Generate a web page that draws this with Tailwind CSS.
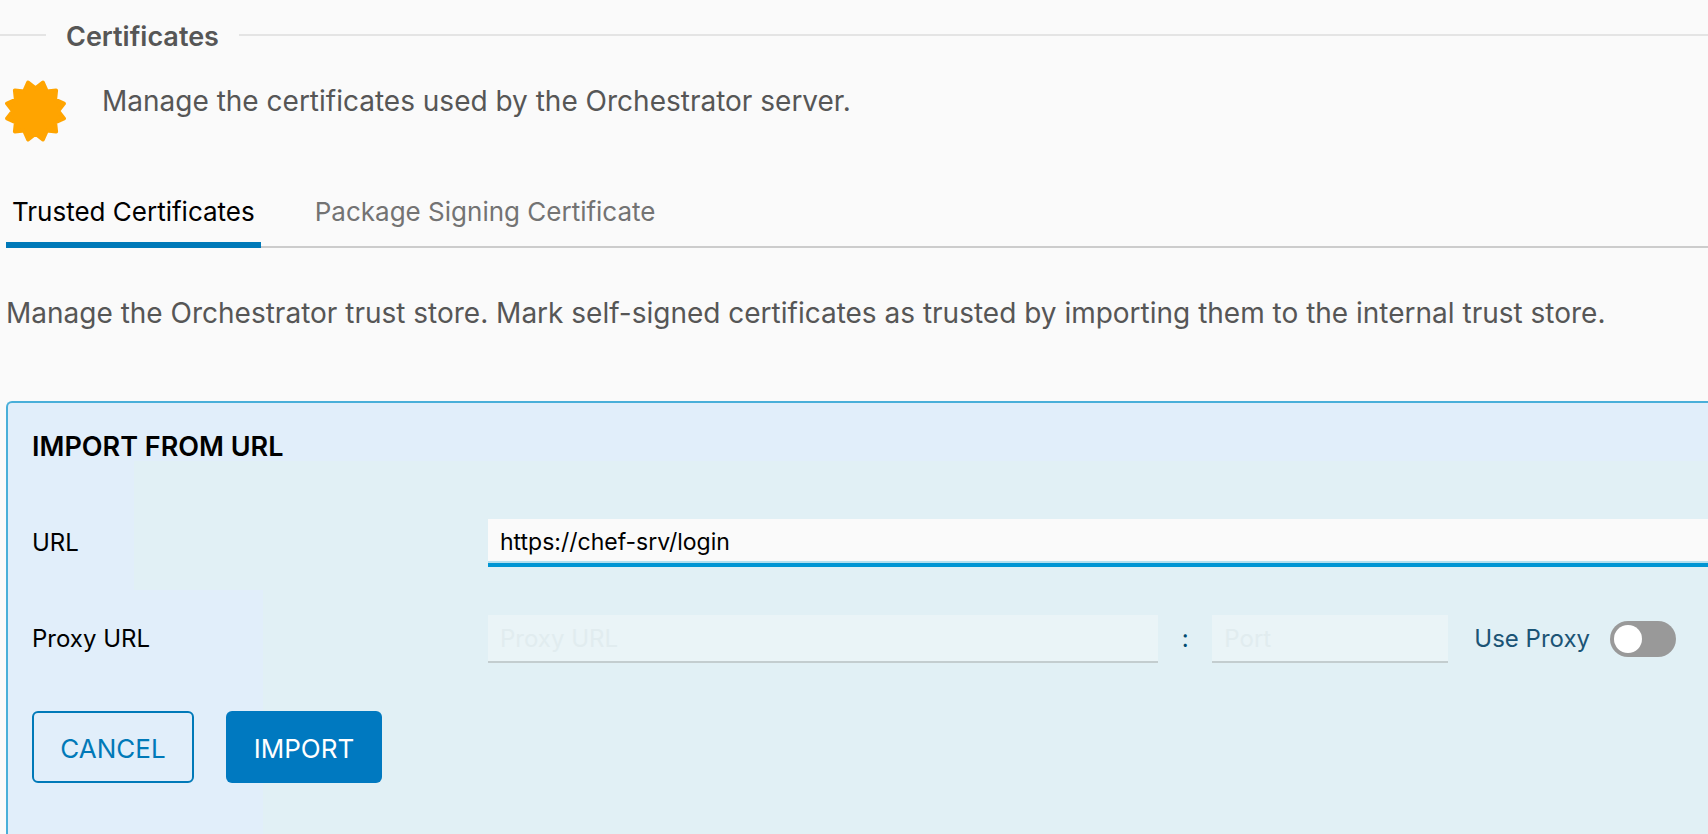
<!DOCTYPE html>
<html lang="en">
<head>
<meta charset="utf-8">
<meta name="viewport" content="width=device-width, initial-scale=1">
<title>Certificates</title>
<script src="https://cdn.jsdelivr.net/npm/@tailwindcss/browser@4"></script>
</head>
<body class="min-h-screen flex flex-col overflow-hidden bg-[#fafafa] font-[Inter,sans-serif] text-[28px] leading-9 text-[#565656]">
  <header class="flex items-center pt-[15px]">
    <span class="w-[46px] h-[2px] bg-[#e4e4e4]"></span>
    <h1 class="px-5 pt-1 text-[27px] font-semibold">Certificates</h1>
    <span class="flex-1 h-[2px] bg-[#e4e4e4]"></span>
  </header>

  <div class="flex items-start gap-9 pl-[5px] pt-[25px]">
    <svg class="w-[61px] h-[62px] shrink-0" viewBox="-30.5 -31 61 62" fill="#ffa400" stroke="#ffa400" stroke-width="4" stroke-linejoin="round" aria-hidden="true">
      <polygon points="0,-22.6 7.4,-28.4 11.3,-19.6 20.6,-20.6 19.6,-11.3 28.4,-7.4 22.6,0 28.4,7.4 19.6,11.3 20.6,20.6 11.3,19.6 7.4,28.4 0,22.6 -7.4,28.4 -11.3,19.6 -20.6,20.6 -19.6,11.3 -28.4,7.4 -22.6,0 -28.4,-7.4 -19.6,-11.3 -20.6,-20.6 -11.3,-19.6 -7.4,-28.4"/>
    </svg>
    <p class="pt-[3px]">Manage the certificates used by the Orchestrator server.</p>
  </div>

  <div role="tablist" class="ml-[6px] mt-[42px] flex gap-12 shadow-[inset_0_-2px_#cccccc] text-[26px]">
    <button role="tab" aria-selected="true" class="px-[6px] pt-2.5 pb-3 text-black border-b-6 border-[#0079b8]">Trusted Certificates</button>
    <button role="tab" aria-selected="false" class="px-[6px] pt-2.5 pb-3 text-[#737373] border-b-6 border-transparent">Package Signing Certificate</button>
  </div>

  <p class="pl-[6px] pt-[47px] whitespace-nowrap">Manage the Orchestrator trust store. Mark self-signed certificates as trusted by importing them to the internal trust store.</p>

  <form class="ml-[6px] mt-[70px] flex-1 rounded-tl-md border-t-2 border-l-2 border-[#49afd9] pl-6 pr-8 pt-[26px] pb-12 text-black text-2xl bg-[#e1eefa] bg-no-repeat bg-[linear-gradient(#e1f0f5,#e1f0f5),linear-gradient(#e1f0f5,#e1f0f5)] [background-position:left_126px_top_58px,left_255px_top_187px] [background-size:100%_129px,100%_100%]">
    <h2 class="text-[27px] leading-9 font-semibold">IMPORT FROM URL</h2>

    <div class="mt-[54px] flex items-center">
      <label for="url" class="w-[456px] shrink-0">URL</label>
      <input id="url" type="text" value="https://chef-srv/login" class="-mr-8 min-w-0 flex-1 h-12 px-3 pt-0.5 text-[23px] bg-[#fafafa] border-b-4 border-[#0095d3] shadow-[inset_0_-2px_#b3dfee] outline-none">
    </div>

    <div class="mt-12 flex items-center">
      <label for="proxy" class="w-[456px] shrink-0">Proxy URL</label>
      <input id="proxy" type="text" placeholder="Proxy URL" disabled class="min-w-0 flex-1 h-12 px-3 bg-[#eaf4f7] border-b-2 border-[#c3cdcf] placeholder:text-[#e1ecef]">
      <span class="w-[54px] text-center text-[#004a70]">:</span>
      <input id="port" type="text" placeholder="Port" aria-label="Port" disabled class="w-[236px] h-12 px-3 bg-[#eaf4f7] border-b-2 border-[#c3cdcf] placeholder:text-[#e1ecef]">
      <label for="use-proxy" class="ml-[26px] mr-5 text-[#1b5475]">Use Proxy</label>
      <input id="use-proxy" type="checkbox" role="switch" class="appearance-none flex items-center w-[66px] h-9 shrink-0 rounded-full bg-[#999999] px-1 before:block before:size-7 before:rounded-full before:bg-white checked:bg-[#62a420] checked:justify-end">
    </div>

    <div class="mt-12 flex gap-8">
      <button type="button" class="w-[162px] h-[72px] rounded-md border-2 border-[#0079b8] pt-1 text-[26px] text-[#0079b8]">CANCEL</button>
      <button type="submit" class="w-[156px] h-[72px] rounded-md bg-[#0079c0] pt-1 text-[26px] text-white">IMPORT</button>
    </div>
  </form>
</body>
</html>
